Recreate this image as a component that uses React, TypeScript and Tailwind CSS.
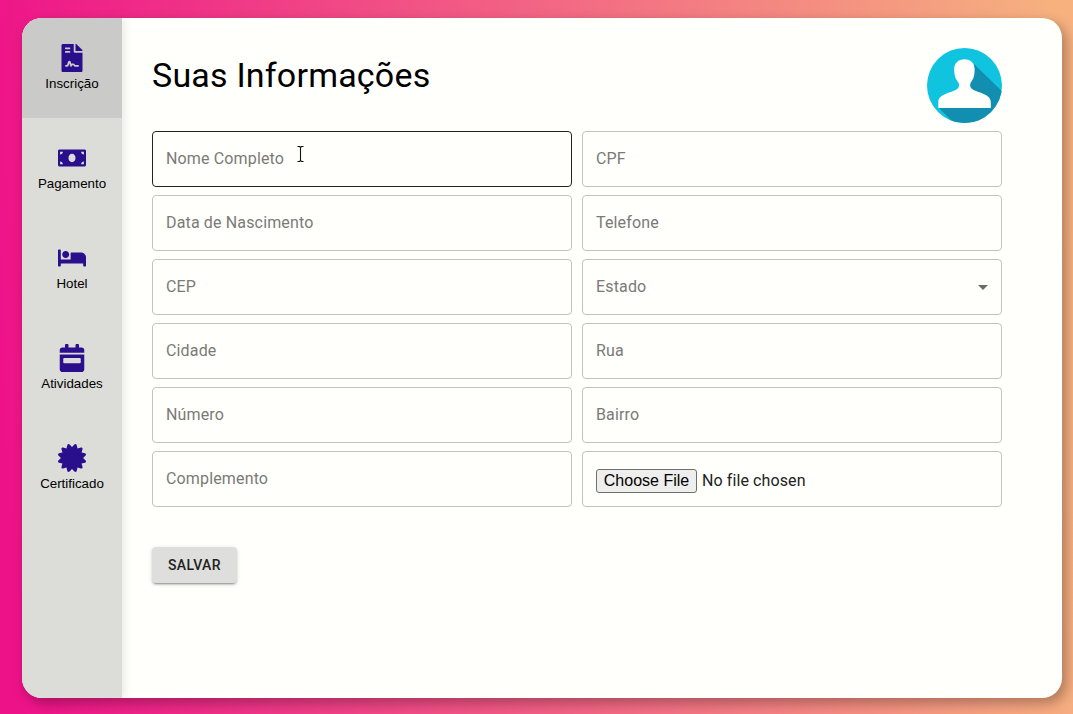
import React from "react";
import { FaFileContract, FaMoneyBill, FaBed, FaCalendarWeek, FaCertificate } from "react-icons/fa";
import type { IconType } from "react-icons";

const menu: { label: string; Icon: IconType; active?: boolean }[] = [
  { label: "Inscrição", Icon: FaFileContract, active: true },
  { label: "Pagamento", Icon: FaMoneyBill },
  { label: "Hotel", Icon: FaBed },
  { label: "Atividades", Icon: FaCalendarWeek },
  { label: "Certificado", Icon: FaCertificate },
];

const fields = [
  "Nome Completo", "CPF", "Data de Nascimento", "Telefone", "CEP", "Estado",
  "Cidade", "Rua", "Número", "Bairro", "Complemento",
];

function Avatar() {
  return (
    <svg className="size-[75px]" viewBox="0 0 75 75">
      <defs>
        <clipPath id="disc"><circle cx="37.5" cy="37.5" r="37.5" /></clipPath>
      </defs>
      <g clipPath="url(#disc)">
        <rect width="75" height="75" fill="#10c4e0" />
        <path d="M47 16 L80 48 V80 H32 L12 60 L40 45 Z" fill="#118eb0" />
        <path
          d="M37.5 11.2C43.5 11.2 47.6 15 47.6 21C47.6 27.5 46.8 30.5 43.8 34.4C43 36 42.6 38 44.2 40.2C48.5 44.8 63.8 45 63.8 54V60H11.3V54C11.3 45 27 44.8 31 40.2C32.6 38 32.2 36 31.4 34.4C28.2 30.5 27.2 27.5 27.2 21C27.2 15 31.5 11.2 37.5 11.2Z"
          fill="#fffffc"
        />
      </g>
    </svg>
  );
}

function TextCursor() {
  return (
    <svg className="absolute left-[143px] top-[13px] h-[18px] w-[9px]" viewBox="0 0 9 18" fill="none">
      <path d="M1.5 1.5H3.5L4.5 2.5L5.5 1.5H7.5M4.5 2.5V15.5M1.5 16.5H3.5L4.5 15.5L5.5 16.5H7.5" stroke="#111" strokeWidth="1.1" />
    </svg>
  );
}

export default function App() {
  return (
    <div className="h-[714px] w-[1073px] overflow-hidden bg-[linear-gradient(86deg,#ee1289_2%,#f6b17f_98%)] pl-[22px] pt-[18px] font-['Roboto',sans-serif]">
      <div className="flex h-[680px] w-[1040px] overflow-hidden rounded-[20px] bg-[#fffffc] shadow-[4px_5px_12px_1px_rgba(0,0,0,0.27)]">
        <nav className="w-[100px] shrink-0 bg-[#dcdcd9] shadow-[2px_0_10px_rgba(0,0,0,0.1)]">
          {menu.map(({ label, Icon, active }) => (
            <a
              key={label}
              className={`flex h-[100px] flex-col items-center justify-center font-['Liberation_Sans',sans-serif] text-[13.33px] leading-[15px] text-black ${active ? "bg-[#cacac8]" : ""}`}
            >
              <Icon className="mb-1 size-7 text-[#2a0f8c]" />
              <span className="pb-px">{label}</span>
            </a>
          ))}
        </nav>
        <main className="flex flex-1 flex-col pl-[30px] pr-[60px] pt-[30px]">
          <header className="flex h-[75px] items-start justify-between">
            <h1 className="pt-[6px] text-[34px] leading-[42px] tracking-[0.2px] text-black">Suas Informações</h1>
            <Avatar />
          </header>
          <form className="mt-2 grid grid-cols-2 gap-x-[10px] gap-y-2">
            {fields.map((label, i) => (
              <div
                key={label}
                className={`relative flex h-14 items-center justify-between rounded border px-[13px] text-base tracking-[0.15px] text-[#7a7a77] ${i === 0 ? "border-[#222]" : "border-[#c1c1be]"}`}
              >
                <span>{label}</span>
                {i === 0 && <TextCursor />}
                {label === "Estado" && (
                  <svg className="h-[5px] w-[10px]" viewBox="0 0 10 5"><path d="M0 0L5 5L10 0Z" fill="#6b6b69" /></svg>
                )}
              </div>
            ))}
            <div className="flex h-14 items-center rounded border border-[#c1c1be] px-[13px] pt-1 text-base text-[#222]">
              <button type="button" className="mr-[5px] h-6 w-[101px] whitespace-nowrap rounded-[3px] border border-[#6f6f6f] bg-[#eeeeec] font-['Liberation_Sans',sans-serif] leading-[22px] text-black">Choose File</button>
              <span className="tracking-[0.1px]">No file chosen</span>
            </div>
          </form>
          <button className="mt-10 h-9 w-[85px] rounded bg-[#dededc] text-sm font-medium tracking-[0.4px] text-[#222] shadow-[0_3px_1px_-2px_rgba(0,0,0,0.2),0_2px_2px_0_rgba(0,0,0,0.14),0_1px_5px_0_rgba(0,0,0,0.12)]">SALVAR</button>
        </main>
      </div>
    </div>
  );
}
